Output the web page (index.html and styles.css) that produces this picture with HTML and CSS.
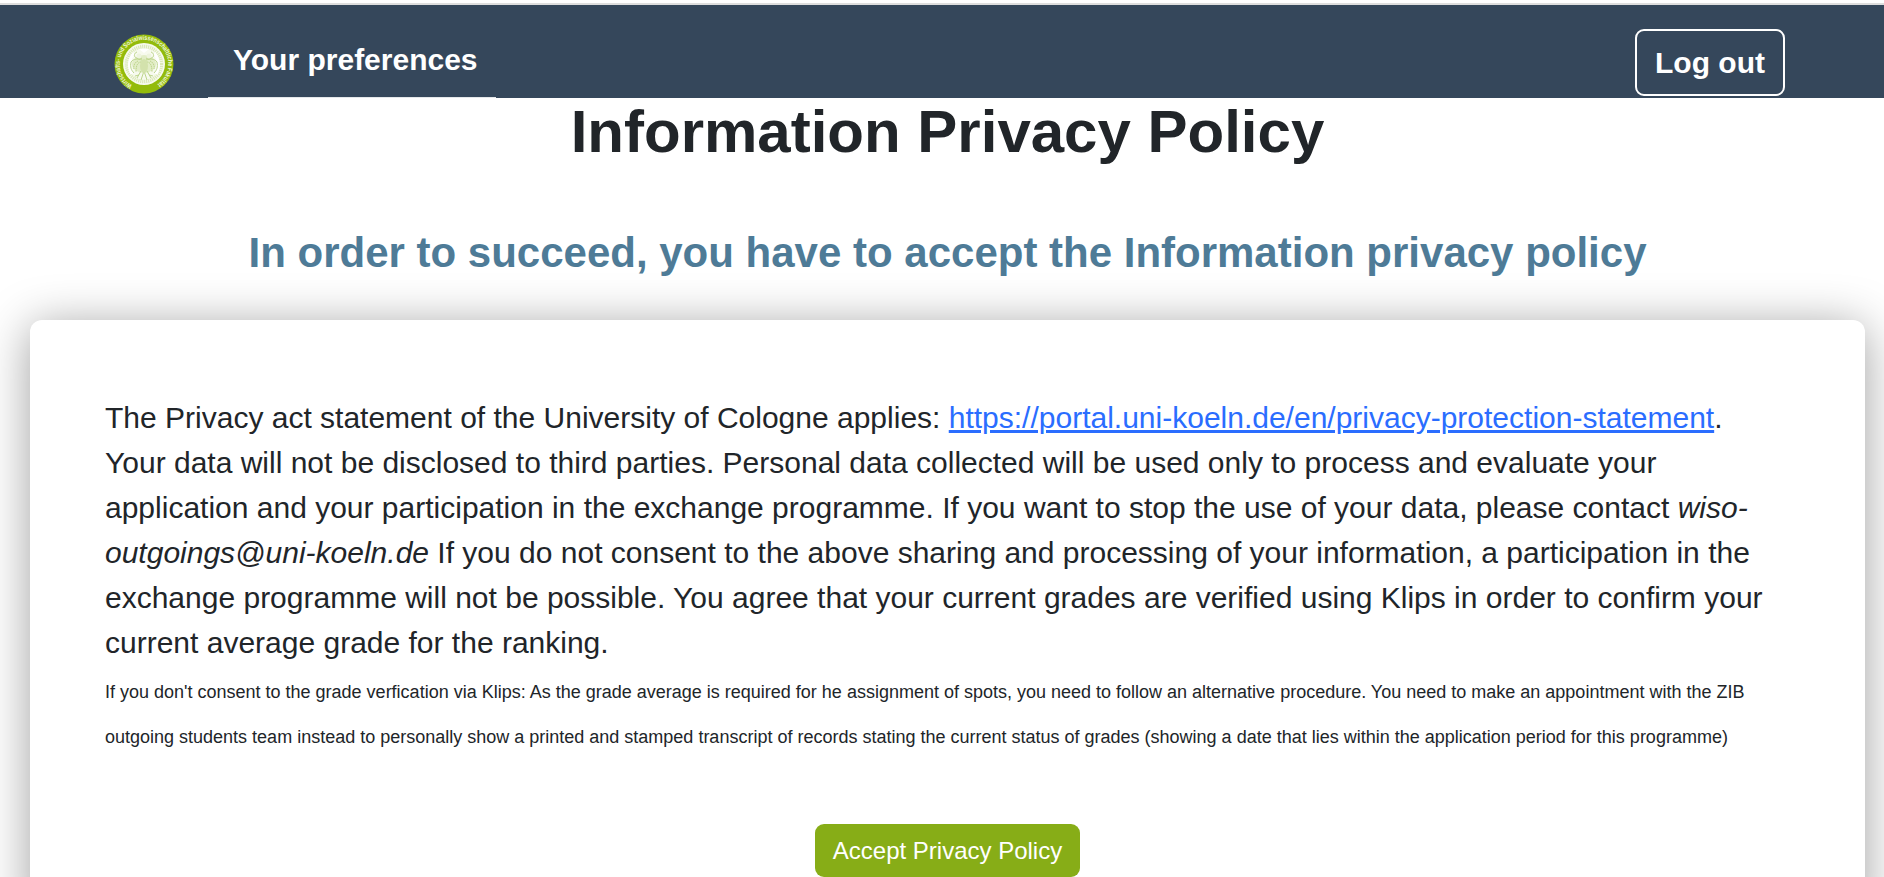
FILE: index.html
```html
<!DOCTYPE html>
<html lang="en">
<head>
<meta charset="utf-8">
<title>Information Privacy Policy</title>
<link rel="stylesheet" href="styles.css">
</head>
<body>
<div class="page">
  <header class="navbar">
    <svg class="logo" viewBox="0 0 60 60" role="img" aria-label="Faculty seal">
      <defs><path id="ring" d="M18.2 51.2 A24.2 24.2 0 1 1 41.8 51.2"/></defs>
      <circle cx="30" cy="30" r="29.5" class="seal"/>
      <circle cx="30" cy="30" r="21" fill="#f7faee"/>
      <circle cx="30" cy="30" r="17.5" fill="none" stroke="#dbe8b8" stroke-width="3.5" stroke-dasharray="1.2 .8"/>
      <path d="M20 19c-5 6-6 14-2 21M40 19c5 6 6 14 2 21" fill="none" stroke="#fff" stroke-width="3"/>
      <ellipse cx="30" cy="30" rx="12" ry="9" fill="#e2edc6"/>
      <g fill="none" stroke="#bdd58c" stroke-width="1">
        <path d="M23 18c-3 1-3 4-2 5s5 3 7 1M37 18c3 1 3 4 2 5s-5 3-7 1"/>
        <path d="M28 26c-4-1-8-2-11 2-1 5 0 8 3 11M32 26c4-1 8-2 11 2 1 5 0 8-3 11"/>
        <path d="M27 28c-3 0-5 3-5 10M24 27c-3 1-5 5-4 8M33 28c3 0 5 3 5 10M36 27c3 1 5 5 4 8" stroke-dasharray="1.5 .6"/>
        <path d="M27 37l-4 7M25 41l-4 1M33 37l4 7M35 41l4 1M30 37l-3 9M30 37l3 9"/>
      </g>
      <ellipse cx="30" cy="32" rx="4" ry="7" fill="#d3e2ac"/>
      <circle cx="25" cy="22" r="2.4" fill="#eef4de"/><circle cx="35" cy="22" r="2.4" fill="#eef4de"/>
      <path d="M25 15h10l-5 4z" fill="#fff"/>
      <text class="seal-text"><textPath href="#ring" textLength="125" lengthAdjust="spacingAndGlyphs">Wirtschafts- und Sozialwissenschaftliche Fakultät</textPath></text>
    </svg>
    <a class="nav-link">Your preferences</a>
    <button class="logout">Log out</button>
  </header>
  <main>
    <h1 class="title">Information Privacy Policy</h1>
    <h2 class="subtitle">In order to succeed, you have to accept the Information privacy policy</h2>
    <section class="card">
      <p class="policy">The Privacy act statement of the University of Cologne applies: <a class="link">https://portal.uni-koeln.de/en/privacy-protection-statement</a>. Your data will not be disclosed to third parties. Personal data collected will be used only to process and evaluate your application and your participation in the exchange programme. If you want to stop the use of your data, please contact <i>wiso-outgoings@uni-koeln.de</i> If you do not consent to the above sharing and processing of your information, a participation in the exchange programme will not be possible. You agree that your current grades are verified using Klips in order to confirm your current average grade for the ranking.<br><span class="note">If you don't consent to the grade verfication via Klips: As the grade average is required for he assignment of spots, you need to follow an alternative procedure. You need to make an appointment with the ZIB outgoing students team instead to personally show a printed and stamped transcript of records stating the current status of grades (showing a date that lies within the application period for this programme)</span></p>
      <button class="accept">Accept Privacy Policy</button>
    </section>
  </main>
</div>
</body>
</html>
```
FILE: styles.css
```css
* { box-sizing: border-box; }
html, body { margin: 0; height: 877px; overflow: hidden; }
body {
  background: #fff;
  color: #212529;
  font-family: "Liberation Sans", Arial, sans-serif;
}
.page { width: 1895px; padding-top: 3px; }
.navbar {
  display: flex;
  align-items: flex-start;
  height: 95px;
  border-top: 2px solid #dedede;
  background: #35475b;
  padding-left: 114px;
}
.logo { width: 60px; height: 60px; margin-top: 29px; }
.seal { fill: #93bb0b; }
.seal-text { font-size: 6.6px; font-weight: bold; fill: #eef5d8; }
.nav-link {
  width: 288px;
  height: 93px;
  margin-left: 34px;
  padding: 32px 0 0 25px;
  border-bottom: 1px solid #e4e7ea;
  color: #fff;
  font-size: 30px;
  font-weight: bold;
  line-height: 45px;
}
.logout {
  width: 150px;
  height: 67px;
  margin: 24px 110px 0 auto;
  padding: 0;
  border: 2px solid #fff;
  border-radius: 9px;
  background: none;
  color: #fff;
  font: bold 30px/45px "Liberation Sans", Arial, sans-serif;
}
.title {
  margin: 0;
  font-size: 60px;
  line-height: 68px;
  text-align: center;
}
.subtitle {
  margin: 62px 0 0;
  color: #4e7b97;
  font-size: 42px;
  line-height: 50px;
  text-align: center;
}
.card {
  height: 602px;
  margin: 42px 30px 0;
  padding: 75px;
  border-radius: 12px;
  background: #fff;
  box-shadow: 0 6px 48px rgba(0, 0, 0, .38);
  text-align: center;
}
.policy {
  margin: 0;
  font-size: 30px;
  line-height: 45px;
  text-align: left;
}
.link { color: #2a6dff; text-decoration: underline; text-decoration-thickness: 3px; }
.note { font-size: 18px; line-height: 1; }
.accept {
  height: 53px;
  margin-top: 69px;
  padding: 0 18px;
  border: 0;
  border-radius: 9px;
  background: #87ad17;
  color: #fff;
  font: 24px/36px "Liberation Sans", Arial, sans-serif;
}
```
